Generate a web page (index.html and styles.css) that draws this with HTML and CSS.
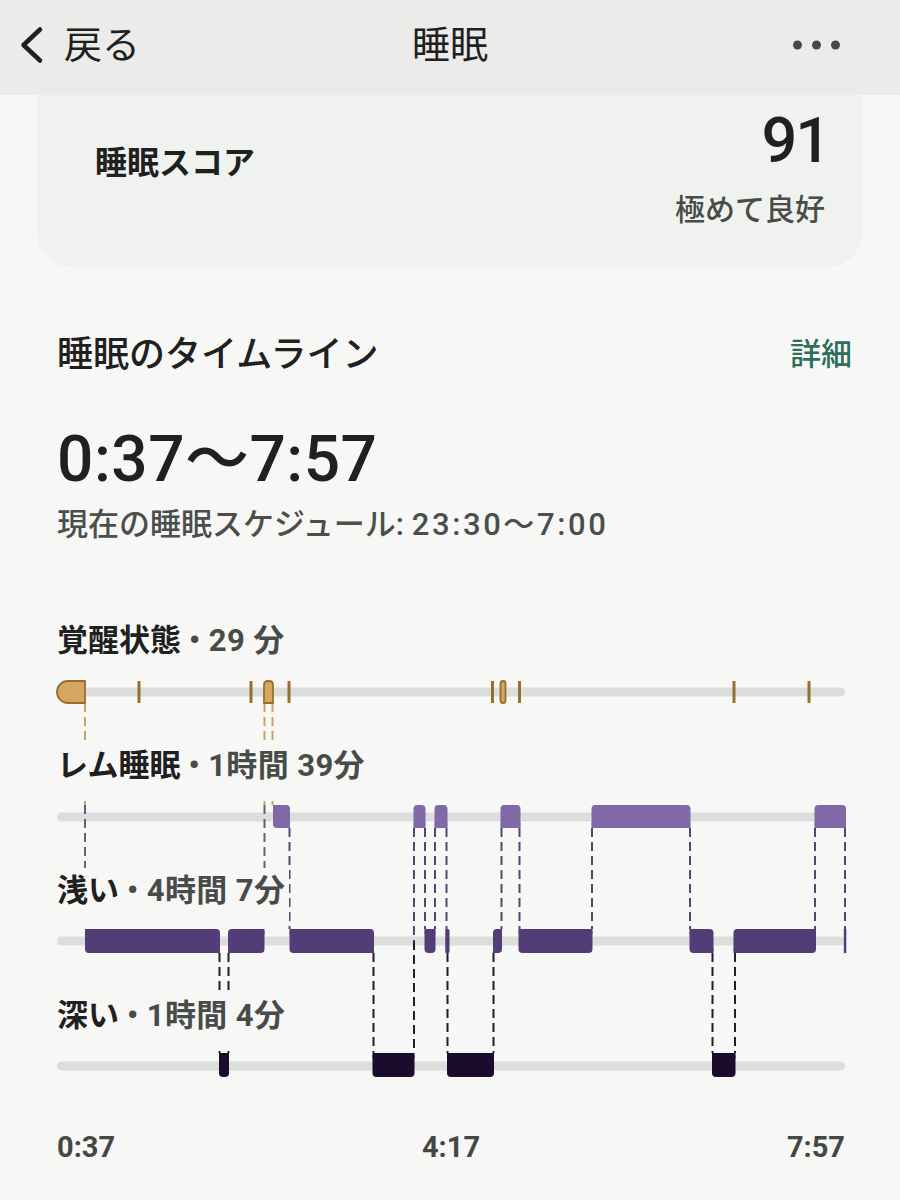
FILE: index.html
```html
<!DOCTYPE html>
<html lang="ja">
<head>
<meta charset="utf-8">
<title>睡眠</title>
<link rel="stylesheet" href="styles.css">
</head>
<body>
<header class="topbar">
  <div class="back">
    <svg class="chev" width="26" height="38" viewBox="0 0 26 38"><path d="M22 3.5 L5.5 19 L22 34.5"/></svg>
    <span>戻る</span>
  </div>
  <h1 class="title">睡眠</h1>
  <div class="more">
    <svg width="47" height="10" viewBox="0 0 47 10"><circle cx="4.5" cy="5" r="4.5"/><circle cx="23.5" cy="5" r="4.5"/><circle cx="42.5" cy="5" r="4.5"/></svg>
  </div>
</header>

<section class="score-card">
  <div class="score-label">睡眠スコア</div>
  <div class="score-right">
    <div class="score-num">91</div>
    <div class="score-word">極めて良好</div>
  </div>
</section>

<section class="timeline">
  <div class="tl-head">
    <h2 class="tl-title">睡眠のタイムライン</h2>
    <a class="tl-link">詳細</a>
  </div>
  <div class="tl-range">0:37〜7:57</div>
  <div class="tl-sched">現在の睡眠スケジュール: <span class="sched-time">23:30〜7:00</span></div>

  <div class="chart">
    <svg class="hypno" width="900" height="500" viewBox="0 0 900 500">
      <!-- tracks -->
      <line class="trk" x1="61.5" y1="71" x2="840.5" y2="71"/>
      <line class="trk" x1="61.5" y1="196" x2="840.5" y2="196"/>
      <line class="trk" x1="61.5" y1="320" x2="840.5" y2="320"/>
      <line class="trk" x1="61.5" y1="445" x2="840.5" y2="445"/>

      <!-- transitions: awake band -->
      <g class="dash d-aw">
        <line x1="85" y1="82" x2="85" y2="184"/>
        <line x1="264.5" y1="82" x2="264.5" y2="184"/>
        <line x1="272.5" y1="82" x2="272.5" y2="184"/>
      </g>
      <g class="dash d-mid">
        <line x1="85" y1="184" x2="85" y2="308"/>
        <line x1="264.5" y1="184" x2="264.5" y2="308"/>
      </g>
      <!-- REM <-> light -->
      <g class="dash d-rem">
        <line x1="289.5" y1="207" x2="289.5" y2="308"/>
        <line x1="414" y1="207" x2="414" y2="320"/>
        <line x1="425" y1="207" x2="425" y2="308"/>
        <line x1="435" y1="207" x2="435" y2="308"/>
        <line x1="446.5" y1="207" x2="446.5" y2="308"/>
        <line x1="501.5" y1="207" x2="501.5" y2="308"/>
        <line x1="519.5" y1="207" x2="519.5" y2="308"/>
        <line x1="592" y1="207" x2="592" y2="308"/>
        <line x1="690" y1="207" x2="690" y2="308"/>
        <line x1="815" y1="207" x2="815" y2="308"/>
        <line x1="845" y1="207" x2="845" y2="308"/>
      </g>
      <!-- light <-> deep -->
      <g class="dash d-deep">
        <line x1="219.5" y1="332" x2="219.5" y2="432"/>
        <line x1="228.5" y1="332" x2="228.5" y2="432"/>
        <line x1="373.5" y1="332" x2="373.5" y2="432"/>
        <line x1="414" y1="320" x2="414" y2="432"/>
        <line x1="447.5" y1="332" x2="447.5" y2="432"/>
        <line x1="493.5" y1="332" x2="493.5" y2="432"/>
        <line x1="712.5" y1="332" x2="712.5" y2="432"/>
        <line x1="735" y1="332" x2="735" y2="432"/>
      </g>

      <!-- awake -->
      <path class="aw" d="M85 60 H68 A11 11 0 0 0 68 82 H85 Z"/>
      <path class="aw" d="M264 82 V64 Q264 60 268 60 H269 Q273 60 273 64 V82 Z"/>
      <rect class="aw" x="500.5" y="60" width="5" height="22" rx="2.5"/>
      <g class="tick">
        <line x1="139" y1="60" x2="139" y2="82"/>
        <line x1="251" y1="60" x2="251" y2="82"/>
        <line x1="289" y1="60" x2="289" y2="82"/>
        <line x1="492.5" y1="60" x2="492.5" y2="82"/>
        <line x1="519.5" y1="60" x2="519.5" y2="82"/>
        <line x1="734" y1="60" x2="734" y2="82"/>
        <line x1="809" y1="60" x2="809" y2="82"/>
      </g>

      <!-- REM -->
      <g class="rem">
        <rect x="273" y="184" width="17" height="23" rx="4"/><rect x="273" y="184" width="5" height="5"/><rect x="285" y="202" width="5" height="5"/>
        <rect x="413.5" y="184" width="12" height="23" rx="4"/><rect x="413.5" y="202" width="12" height="5"/>
        <rect x="434.5" y="184" width="13" height="23" rx="4"/><rect x="434.5" y="202" width="13" height="5"/>
        <rect x="500.5" y="184" width="20" height="23" rx="4"/><rect x="500.5" y="202" width="20" height="5"/>
        <rect x="591.5" y="184" width="99" height="23" rx="4"/><rect x="591.5" y="202" width="99" height="5"/>
        <rect x="814.5" y="184" width="31.5" height="23" rx="4"/><rect x="814.5" y="202" width="31.5" height="5"/>
      </g>

      <!-- light -->
      <g class="light">
        <rect x="85" y="308" width="135" height="24" rx="4"/><rect x="85" y="308" width="5" height="5"/><rect x="215" y="327" width="5" height="5"/>
        <rect x="228" y="308" width="36.5" height="24" rx="4"/><rect x="228" y="327" width="5" height="5"/><rect x="259.5" y="308" width="5" height="5"/>
        <rect x="289.5" y="308" width="84.5" height="24" rx="4"/><rect x="289.5" y="308" width="5" height="5"/><rect x="369" y="327" width="5" height="5"/>
        <rect x="424.5" y="308" width="11" height="24" rx="4"/><rect x="424.5" y="308" width="11" height="5"/>
        <rect x="445.5" y="308" width="4" height="24" rx="1.5"/><rect x="445.5" y="308" width="2" height="24"/>
        <rect x="493" y="308" width="9" height="24" rx="4"/><rect x="493" y="327" width="4" height="5"/><rect x="497" y="308" width="5" height="5"/>
        <rect x="518.5" y="308" width="74" height="24" rx="4"/><rect x="518.5" y="308" width="74" height="5"/>
        <rect x="689.5" y="308" width="24" height="24" rx="4"/><rect x="689.5" y="308" width="5" height="5"/><rect x="708.5" y="327" width="5" height="5"/>
        <rect x="733.5" y="308" width="82.5" height="24" rx="4"/><rect x="733.5" y="327" width="5" height="5"/><rect x="811" y="308" width="5" height="5"/>
        <rect x="843.8" y="308" width="2.5" height="24"/>
      </g>

      <!-- deep -->
      <g class="deep">
        <rect x="219" y="432" width="10" height="24" rx="4"/><rect x="219" y="432" width="10" height="5"/>
        <rect x="372.5" y="432" width="42" height="24" rx="4"/><rect x="372.5" y="432" width="42" height="5"/>
        <rect x="447" y="432" width="47" height="24" rx="4"/><rect x="447" y="432" width="47" height="5"/>
        <rect x="712" y="432" width="23.5" height="24" rx="4"/><rect x="712" y="432" width="23.5" height="5"/>
      </g>
    </svg>

    <div class="lane"><div class="lane-label"><span class="stage">覚醒状態</span><span class="dur"> • 29 分</span></div></div>
    <div class="lane"><div class="lane-label"><span class="stage">レム睡眠</span><span class="dur"> • 1時間 39分</span></div></div>
    <div class="lane"><div class="lane-label"><span class="stage">浅い</span><span class="dur"> • 4時間 7分</span></div></div>
    <div class="lane"><div class="lane-label"><span class="stage">深い</span><span class="dur"> • 1時間 4分</span></div></div>
  </div>

  <div class="axis">
    <span>0:37</span>
    <span>4:17</span>
    <span>7:57</span>
  </div>
</section>
</body>
</html>
```

FILE: styles.css
```css
html, body {
  margin: 0;
  padding: 0;
}
body {
  width: 900px;
  height: 1200px;
  overflow: hidden;
  background: #f7f8f6;
  color: #1f2120;
  font-family: Roboto, "Noto Sans CJK JP", sans-serif;
}

/* top bar */
.topbar {
  height: 95px;
  box-sizing: border-box;
  padding: 0 18px 6px 18px;
  background: #ebecea;
  display: grid;
  grid-template-columns: 1fr auto 1fr;
  align-items: center;
}
.back {
  display: flex;
  align-items: center;
  font-size: 38px;
  line-height: 44px;
  color: #1f2120;
}
.chev {
  margin-right: 20px;
}
.chev path {
  fill: none;
  stroke: #1f2120;
  stroke-width: 4.5;
  stroke-linecap: round;
  stroke-linejoin: round;
}
.title {
  margin: 0;
  font-size: 38px;
  line-height: 44px;
  font-weight: 400;
  color: #1f2120;
}
.more {
  display: flex;
  justify-content: flex-end;
  padding-right: 42px;
}
.more circle {
  fill: #454947;
}

/* score card */
.score-card {
  margin: 0 38px 0 37px;
  padding: 14px 37px 37px 58px;
  background: #f0f2ef;
  border-radius: 0 0 34px 34px;
  display: flex;
  justify-content: space-between;
  align-items: flex-start;
}
.score-label {
  margin-top: 33px;
  font-size: 32px;
  line-height: 42px;
  font-weight: 700;
}
.score-right {
  text-align: right;
}
.score-num {
  margin-right: -4px;
  font-size: 63px;
  line-height: 64px;
  font-weight: 500;
  letter-spacing: -2px;
}
.score-word {
  margin-top: 17px;
  font-size: 30px;
  line-height: 40px;
  font-weight: 500;
  color: #474c49;
}

/* timeline */
.timeline {
  padding: 64px 48px 0 57px;
}
.tl-head {
  display: flex;
  justify-content: space-between;
  align-items: center;
  height: 48px;
}
.tl-title {
  margin: 0;
  font-size: 36px;
  line-height: 48px;
  font-weight: 500;
}
.tl-link {
  font-size: 31px;
  line-height: 40px;
  font-weight: 500;
  color: #2d6d5c;
}
.tl-range {
  margin-top: 43px;
  font-size: 64px;
  line-height: 76px;
  font-weight: 500;
  letter-spacing: 0.5px;
}
.tl-sched {
  margin-top: 7px;
  font-size: 31px;
  line-height: 40px;
  font-weight: 500;
  color: #4a4f4c;
}
.sched-time {
  letter-spacing: 2.6px;
}

.chart {
  position: relative;
  height: 500px;
  margin: 76px -48px 0 -57px;
  padding-left: 57px;
}
.hypno {
  position: absolute;
  left: 0;
  top: 0;
}
.lane {
  height: 125px;
  display: flex;
  flex-direction: column;
  align-items: flex-start;
}
.lane-label {
  position: relative;
  z-index: 1;
  margin-top: -3px;
  padding: 3px 4px 15px 0;
  background: #f7f8f6;
  font-size: 31px;
  line-height: 40px;
  font-weight: 700;
  white-space: pre;
}
.stage {
  color: #1f2120;
}
.dur {
  color: #474c49;
  letter-spacing: 0.4px;
}

/* chart marks */
.trk {
  stroke: #dcdedb;
  stroke-width: 9;
  stroke-linecap: round;
}
.dash line {
  stroke-width: 2;
  stroke-dasharray: 9 5;
}
.d-aw line { stroke: #c9a362; }
.d-mid line { stroke: #6b5d7f; }
.d-rem line { stroke: #54466e; }
.d-deep line { stroke: #231b31; }
.aw {
  fill: #d5a75e;
  stroke: #94702f;
  stroke-width: 1.8;
}
.tick line {
  stroke: #94702f;
  stroke-width: 3;
}
.rem { fill: #8069a6; }
.light { fill: #523d78; }
.deep { fill: #1b0c2d; }

.axis {
  margin-top: 8px;
  padding-right: 7px;
  display: flex;
  justify-content: space-between;
  font-size: 29px;
  line-height: 36px;
  font-weight: 700;
  color: #434845;
}
```
